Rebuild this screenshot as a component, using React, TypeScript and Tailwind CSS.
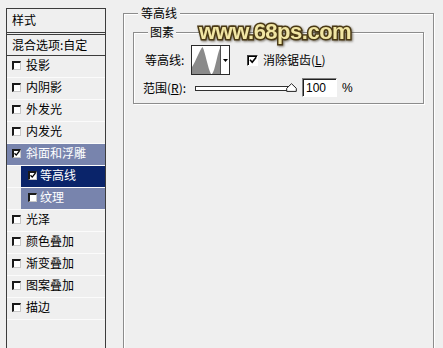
import React from "react";

function ListCheck({ checked }: { checked?: boolean }) {
  return (
    <span className="w-[9px] h-[9px] shrink-0 bg-white border-t-[2px] border-l-[2px] border-t-[#1a1a1a] border-l-[#1a1a1a] border-r border-b border-r-[#c8c8c8] border-b-[#c8c8c8] flex items-center justify-center">
      {checked && (
        <svg width="7" height="7" viewBox="0 0 7 7">
          <path d="M0.6 3.2 L2.6 5.4 L6.4 0.6" fill="none" stroke="#000" strokeWidth="1.5" />
        </svg>
      )}
    </span>
  );
}

function Row({ label, checked, sel }: { label: string; checked?: boolean; sel?: boolean }) {
  return (
    <div className="h-[22px] border-b border-[#fbfbfb] shrink-0">
      <div
        className={
          "h-[21px] pl-[5px] pb-[3px] flex items-center gap-[5px] " +
          (sel ? "bg-[#7884ad] text-white" : "")
        }
      >
        <ListCheck checked={checked} />
        <span>{label}</span>
      </div>
    </div>
  );
}

function SubRow({ label, checked, bg }: { label: string; checked?: boolean; bg: string }) {
  return (
    <div className="h-[22px] border-b border-[#fbfbfb] pl-[14px] shrink-0">
      <div className={"h-[21px] pl-[7px] pb-[3px] flex items-center gap-[3px] text-white " + bg}>
        <ListCheck checked={checked} />
        <span>{label}</span>
      </div>
    </div>
  );
}

export default function App() {
  return (
    <div className="w-[443px] h-[348px] overflow-hidden bg-[#efefef] flex items-start relative font-['Noto_Sans_CJK_SC','Noto_Sans',sans-serif] text-[12px] leading-[14px] text-black">
      {/* Left styles list */}
      <div className="ml-[6px] mt-[8px] w-[100px] h-[360px] shrink-0 border border-[#3c3c3c] bg-[#efefef] flex flex-col">
        <div className="h-[26px] pl-[5px] pb-[1px] flex items-center border-b-[3px] border-double border-[#3c3c3c] shrink-0">
          样式
        </div>
        <div className="h-[21px] pl-[5px] flex items-center border-b border-[#3c3c3c] shrink-0">
          混合选项:自定
        </div>
        <Row label="投影" />
        <Row label="内阴影" />
        <Row label="外发光" />
        <Row label="内发光" />
        <Row label="斜面和浮雕" checked sel />
        <SubRow label="等高线" checked bg="bg-[#0a246a]" />
        <SubRow label="纹理" bg="bg-[#7884ad]" />
        <Row label="光泽" />
        <Row label="颜色叠加" />
        <Row label="渐变叠加" />
        <Row label="图案叠加" />
        <Row label="描边" />
      </div>

      {/* Right group */}
      <div className="ml-[17px] mt-[13px] w-[311px] h-[350px] shrink-0 relative border border-[#8c8c8c] shadow-[inset_1px_1px_0_#ffffff,1px_1px_0_#ffffff] pt-[18px] px-[9px]">
        <span className="absolute left-[14px] top-[-8px] px-[3px] bg-[#efefef] leading-[14px]">等高线</span>

        <div className="w-[291px] relative border border-[#8c8c8c] shadow-[inset_1px_1px_0_#ffffff,1px_1px_0_#ffffff] pt-[12px] pb-[6px]">
          <span className="absolute left-[14px] top-[-8px] px-[2px] bg-[#efefef] leading-[14px]">图素</span>

          <div className="h-[30px] pl-[11px] flex items-center">
            <span className="w-[46px] shrink-0">等高线:</span>
            <svg width="39" height="30" viewBox="0 0 39 30" className="shrink-0">
              <rect x="0.5" y="0.5" width="38" height="29" fill="#ffffff" stroke="#2a2a2a" />
              <path d="M1 29 L1 22 C5 16 9 4 11.5 2 C14 6 17 24 20 29 Z" fill="#8a8a8a" />
              <path d="M21 29 C24 26 26 10 29 3 L29 29 Z" fill="#8a8a8a" />
              <line x1="29.5" y1="1" x2="29.5" y2="29" stroke="#505050" />
              <path d="M32 14 H37 L34.5 17 Z" fill="#000" />
            </svg>
            <span className="ml-[17px] w-[11px] h-[11px] shrink-0 bg-white border-t border-l border-t-[#404040] border-l-[#404040] border-r border-b border-r-[#ffffff] border-b-[#ffffff] shadow-[inset_1px_1px_0_#000] flex items-center justify-center">
              <svg width="8" height="8" viewBox="0 0 8 8">
                <path d="M1 3.8 L3.2 6.2 L7.2 1.2" fill="none" stroke="#000" strokeWidth="1.6" />
              </svg>
            </span>
            <span className="ml-[5px]">
              消除锯齿(<span className="underline">L</span>)
            </span>
          </div>

          <div className="mt-[3px] h-[19px] pl-[9px] flex items-center">
            <span className="w-[52px] shrink-0">
              范围(<span className="underline">R</span>):
            </span>
            <div className="w-[102px] h-[19px] relative flex items-center shrink-0">
              <div className="w-[95px] h-[5px] border border-[#303030] bg-white mt-[1px]" />
              <svg width="11" height="9" viewBox="0 0 11 9" className="absolute right-[0px] top-[5px]">
                <path d="M5.5 0.7 L10.3 5.3 L10.3 8.4 L0.7 8.4 L0.7 5.3 Z" fill="#ffffff" stroke="#222" />
              </svg>
            </div>
            <div className="ml-[5px] w-[35px] h-[19px] shrink-0 bg-white border-t border-l border-t-[#808080] border-l-[#808080] border-b border-r border-b-[#ffffff] border-r-[#ffffff] shadow-[inset_1px_1px_0_#202020] pl-[3px] flex items-center font-['Liberation_Sans',sans-serif]">
              100
            </div>
            <span className="ml-[5px] font-['Liberation_Sans',sans-serif]">%</span>
          </div>
        </div>
      </div>

      {/* Watermark */}
      <div className="absolute left-[199px] top-[21px] font-['Liberation_Sans',sans-serif] font-bold text-[22px] leading-[22px] tracking-[-0.5px] text-[#f1e6a4] [-webkit-text-stroke:3px_#4a3914] [paint-order:stroke_fill] drop-shadow-[1px_1px_1px_rgba(40,30,10,0.6)]">
        www.68ps.com
      </div>
    </div>
  );
}
